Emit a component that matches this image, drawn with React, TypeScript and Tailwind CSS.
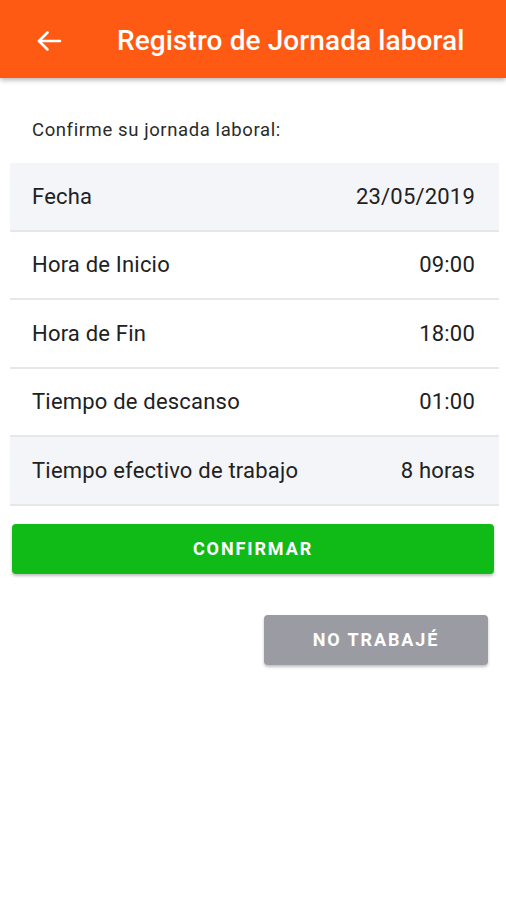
const rows = [
  { label: "Fecha", value: "23/05/2019", shaded: true },
  { label: "Hora de Inicio", value: "09:00", shaded: false },
  { label: "Hora de Fin", value: "18:00", shaded: false },
  { label: "Tiempo de descanso", value: "01:00", shaded: false },
  { label: "Tiempo efectivo de trabajo", value: "8 horas", shaded: true },
]

function BackArrow() {
  return (
    <svg width="26" height="22" viewBox="0 0 26 22" fill="none" stroke="white" strokeWidth="2.6" strokeLinecap="round" strokeLinejoin="round">
      <path d="M24 11H3" />
      <path d="M11.5 2.5L3 11l8.5 8.5" />
    </svg>
  )
}

export default function App() {
  return (
    <div className="w-[506px] h-[900px] bg-white text-[#212121]" style={{ fontFamily: "Roboto, 'Liberation Sans', sans-serif" }}>
      <header className="h-[78px] bg-[#ff5a14] flex items-center pt-[4px] shadow-[0_2px_5px_rgba(0,0,0,0.3)] relative z-10">
        <div className="pl-[36px] w-[117px] flex items-center">
          <BackArrow />
        </div>
        <h1 className="text-white text-[28px] font-medium tracking-[0.1px]">Registro de Jornada laboral</h1>
      </header>

      <p className="pl-[32px] pt-[41px] text-[18.5px] leading-[22px] tracking-[0.6px] text-[#2a2a2a]">Confirme su jornada laboral:</p>

      <div className="mx-[10px] mt-[22px] w-[489px]">
        {rows.map((r) => (
          <div
            key={r.label}
            className={`h-[68.5px] flex items-center justify-between pl-[22px] pr-[24px] border-b-2 border-[#e6e7ea] text-[22px] tracking-[0.2px] ${r.shaded ? "bg-[#f4f5f8]" : "bg-white"}`}
          >
            <span>{r.label}</span>
            <span>{r.value}</span>
          </div>
        ))}
      </div>

      <div className="px-[12px] mt-[18px]">
        <button className="w-full h-[50px] rounded-[4px] bg-[#10bb18] text-white font-bold text-[18px] tracking-[1.9px] shadow-[0_2px_3px_rgba(0,0,0,0.25)]">
          CONFIRMAR
        </button>
      </div>

      <div className="flex justify-end pr-[18px] mt-[41px]">
        <button className="w-[224px] h-[50px] rounded-[4px] bg-[#9b9ca3] text-white font-bold text-[18px] tracking-[1.9px] shadow-[0_2px_3px_rgba(0,0,0,0.25)]">
          NO TRABAJÉ
        </button>
      </div>
    </div>
  )
}
